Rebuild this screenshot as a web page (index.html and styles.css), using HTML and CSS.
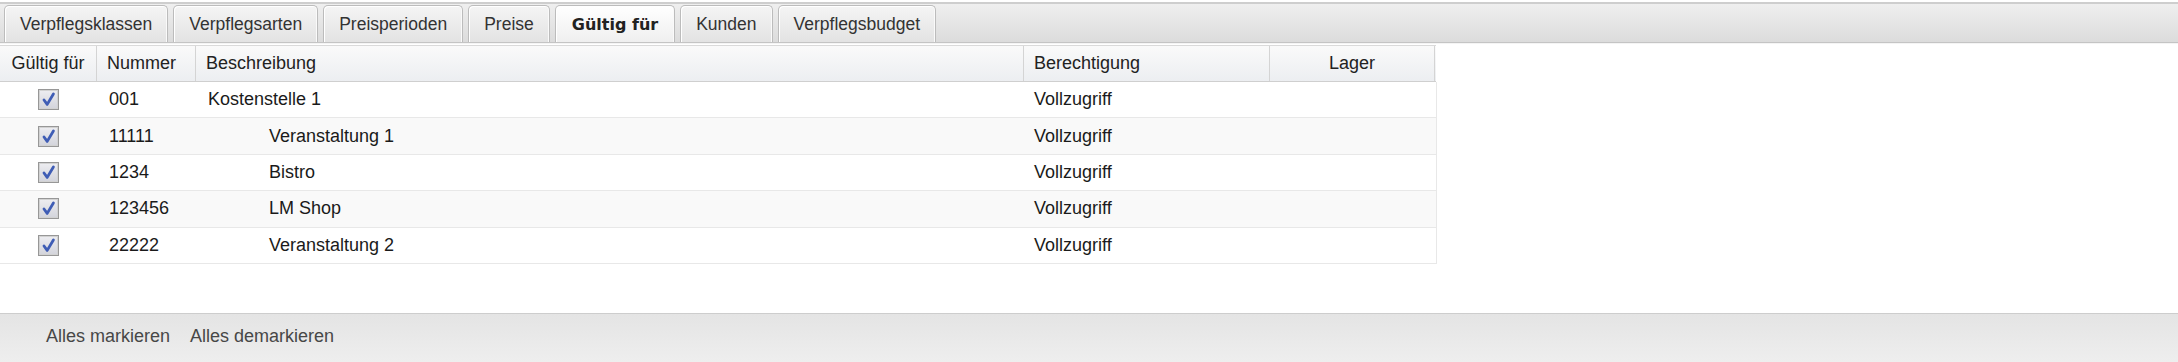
FILE: index.html
```html
<!DOCTYPE html>
<html lang="de">
<head>
    <meta charset="UTF-8">
    <title>Gültig für</title>
    <link rel="stylesheet" href="styles.css">
</head>
<body>
    <svg class="defs" width="0" height="0">
        <defs>
            <linearGradient id="chk-fill" x1="0" y1="0" x2="0" y2="1">
                <stop offset="0" stop-color="#ececf0"/>
                <stop offset="1" stop-color="#d4d5dc"/>
            </linearGradient>
            <symbol id="chk" viewBox="0 0 21 21">
                <rect x="0.5" y="0.5" width="20" height="20" fill="#d2d2d2" stroke="#979797"/>
                <rect x="2" y="2" width="17" height="17" fill="url(#chk-fill)"/>
                <path d="M6 11 L9.2 15.4 L15.4 5" fill="none" stroke="#3f5db5" stroke-width="2.8" stroke-linecap="round" stroke-linejoin="round"/>
            </symbol>
        </defs>
    </svg>

    <div class="page">
        <div class="tabs">
            <div class="tab">Verpflegsklassen</div>
            <div class="tab">Verpflegsarten</div>
            <div class="tab">Preisperioden</div>
            <div class="tab">Preise</div>
            <div class="tab active">Gültig für</div>
            <div class="tab">Kunden</div>
            <div class="tab">Verpflegsbudget</div>
        </div>

        <div class="grid">
            <div class="head">
                <div class="center">Gültig für</div>
                <div>Nummer</div>
                <div>Beschreibung</div>
                <div>Berechtigung</div>
                <div class="center">Lager</div>
            </div>

            <div class="row">
                <div class="center"><svg class="check"><use href="#chk"/></svg></div>
                <div>001</div>
                <div>Kostenstelle 1</div>
                <div class="perm">Vollzugriff</div>
                <div></div>
            </div>
            <div class="row alt">
                <div class="center"><svg class="check"><use href="#chk"/></svg></div>
                <div>11111</div>
                <div class="sub">Veranstaltung 1</div>
                <div class="perm">Vollzugriff</div>
                <div></div>
            </div>
            <div class="row">
                <div class="center"><svg class="check"><use href="#chk"/></svg></div>
                <div>1234</div>
                <div class="sub">Bistro</div>
                <div class="perm">Vollzugriff</div>
                <div></div>
            </div>
            <div class="row alt">
                <div class="center"><svg class="check"><use href="#chk"/></svg></div>
                <div>123456</div>
                <div class="sub">LM Shop</div>
                <div class="perm">Vollzugriff</div>
                <div></div>
            </div>
            <div class="row">
                <div class="center"><svg class="check"><use href="#chk"/></svg></div>
                <div>22222</div>
                <div class="sub">Veranstaltung 2</div>
                <div class="perm">Vollzugriff</div>
                <div></div>
            </div>
        </div>

        <div class="bar">
            <span class="link">Alles markieren</span>
            <span class="link">Alles demarkieren</span>
        </div>
    </div>
</body>
</html>
```

FILE: styles.css
```css
* {
    box-sizing: border-box;
}

body {
    margin: 0;
    font-family: "Liberation Sans", Arial, sans-serif;
    font-size: 18px;
    color: #1a1a1a;
    background-color: #fff;
}

.defs {
    position: absolute;
}

.page {
    display: flex;
    flex-direction: column;
    height: 100vh;
}

/* tab strip */
.tabs {
    display: flex;
    gap: 5px;
    margin-top: 2px;
    padding: 1px 0 0 4px;
    border-top: 2px solid #cecece;
    border-bottom: 1px solid #c4c4c4;
    background: linear-gradient(#efefef, #dcdcdc);
}

.tab {
    display: flex;
    align-items: center;
    height: 37px;
    padding: 0 15px;
    border: 1px solid #bcbcbc;
    border-bottom: 0;
    border-radius: 5px 5px 0 0;
    background: linear-gradient(#f5f5f5, #e3e3e3);
    box-shadow: inset 1px 1px 0 #fff, inset -1px 0 0 #fafafa;
    font-size: 17.5px;
    color: #333;
}

.tab.active {
    font-family: "DejaVu Sans", sans-serif;
    font-weight: bold;
    font-size: 16px;
    padding: 0 16px;
    color: #222;
    background: linear-gradient(#ffffff, #efefef);
}

/* grid */
.grid {
    flex: 1;
    border-top: 1px solid #f4f4f4;
    padding-top: 1px;
}

.head,
.row {
    display: grid;
    grid-template-columns: 97px 99px 828px 246px 166px;
}

.head {
    width: 1436px;
    height: 37px;
    border-top: 1px solid #dadada;
    border-bottom: 1px solid #cfcfcf;
    background: linear-gradient(#fafafa, #eceef1);
    color: #222;
}

.head > div {
    display: flex;
    align-items: center;
    padding: 0 10px;
    border-right: 1px solid #d4d4d4;
}

.head > div:last-child {
    margin-right: 1px;
}

.row {
    width: 1437px;
    height: 36.4px;
    align-items: center;
    border-bottom: 1px solid #e8e8e8;
    border-right: 1px solid #e8e8e8;
}

.row.alt {
    background-color: #f9f9f9;
}

.row > div {
    padding: 0 12px;
    white-space: nowrap;
}

.row > div.perm {
    padding-left: 10px;
}

.row > div.sub {
    padding-left: 73px;
}

.head > div.center,
.row > div.center {
    justify-content: center;
    text-align: center;
    padding: 0;
}

.row > div.center {
    display: flex;
    align-items: center;
}

.check {
    width: 21px;
    height: 21px;
    display: block;
}

/* bottom toolbar */
.bar {
    display: flex;
    align-items: center;
    gap: 20px;
    height: 49px;
    padding: 0 0 4px 46px;
    border-top: 1px solid #cdcdcd;
    background: linear-gradient(#e4e4e4, #eeeeee);
    color: #474747;
}

.link {
    cursor: pointer;
}
```
